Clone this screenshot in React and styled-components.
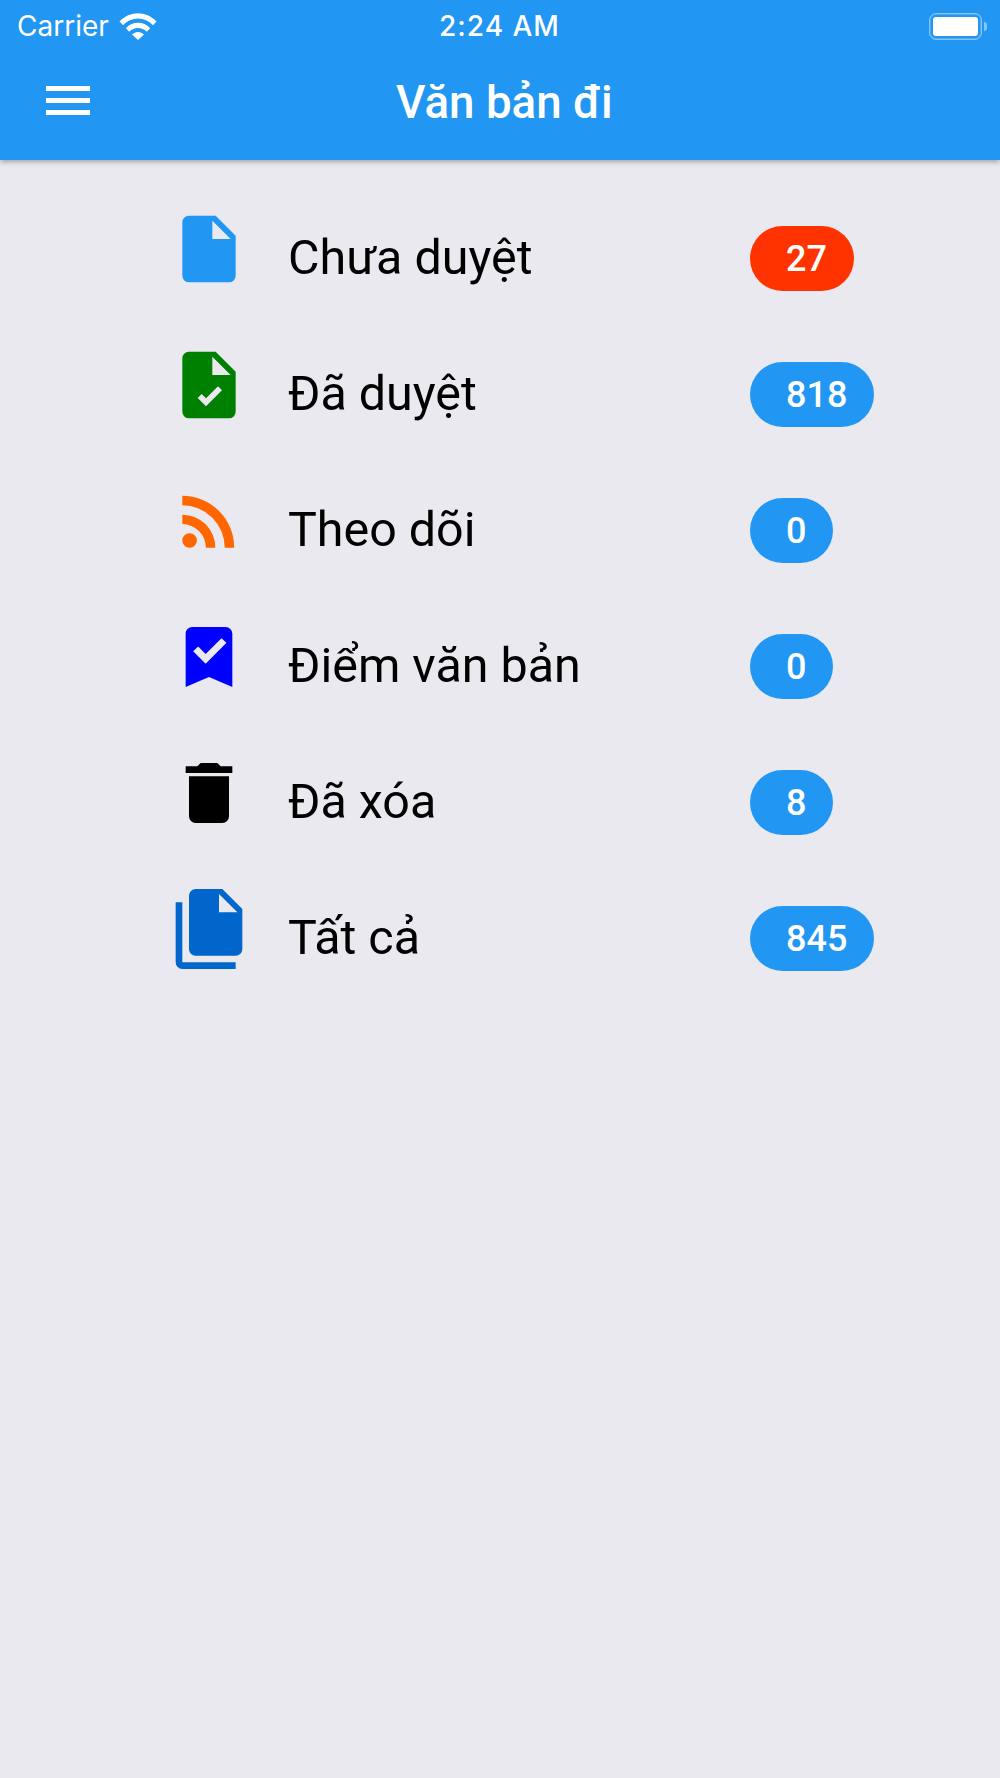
import React from 'react';
import styled, { createGlobalStyle } from 'styled-components';

const MENU_BLUE = '#2196f3';

const GlobalStyle = createGlobalStyle`
  html, body {
    margin: 0;
    padding: 0;
    background: #e9e9ef;
    font-family: Roboto, "Liberation Sans", sans-serif;
  }
`;

const Page = styled.div`
  width: 1000px;
  height: 1778px;
  overflow: hidden;
  background: #e9e9ef;
`;

const Header = styled.header`
  height: 160px;
  background: ${MENU_BLUE};
  color: #fff;
  box-shadow: 0 2px 5px rgba(0, 0, 0, 0.3);
`;

const StatusBar = styled.div`
  height: 48px;
  display: grid;
  grid-template-columns: 1fr auto 1fr;
  align-items: center;
  padding: 2px 13px 0 17px;
  font-family: Inter, "Liberation Sans", sans-serif;
  font-size: 28px;
`;

const Carrier = styled.div`
  display: flex;
  align-items: center;
  gap: 10px;
`;

const Clock = styled.div`
  font-weight: 500;
  letter-spacing: 1px;
  margin-left: -5px;
`;

const Battery = styled.div`
  justify-self: end;
  display: flex;
  align-items: center;
  gap: 2px;
`;

const BatteryShell = styled.div`
  box-sizing: border-box;
  width: 53px;
  height: 27px;
  padding: 3px;
  border: 1px solid rgba(255, 255, 255, 0.45);
  border-radius: 7px;
  box-shadow: inset 0 0 0 1px rgba(255, 255, 255, 0.2);
`;

const BatteryLevel = styled.div`
  height: 100%;
  background: #fff;
  border-radius: 3px;
`;

const BatteryNub = styled.div`
  width: 3px;
  height: 9px;
  background: rgba(255, 255, 255, 0.45);
  border-radius: 0 3px 3px 0;
`;

const NavBar = styled.div`
  height: 112px;
  display: flex;
  align-items: flex-start;
  padding-left: 46px;
`;

const MenuButton = styled.div`
  width: 44px;
  margin-top: 36px;
  display: flex;
  flex-direction: column;
  gap: 7px;
`;

const MenuLine = styled.div`
  height: 5px;
  background: #fff;
`;

const Title = styled.h1`
  margin: 0 0 0 306px;
  font-size: 45.7px;
  font-weight: 470;
  line-height: 56px;
  padding-top: 25px;
  white-space: nowrap;
`;

const List = styled.div`
  padding: 49px 0 0 169px;
`;

const Row = styled.div`
  height: 136px;
  display: flex;
  align-items: flex-start;
`;

const IconBox = styled.svg`
  width: 80px;
  height: 80px;
  flex: none;
  fill: ${(p) => p.$color};
`;

const Label = styled.div`
  width: 462px;
  margin-left: 39px;
  font-size: 48.4px;
  line-height: 97px;
  color: #000;
  white-space: nowrap;
`;

const Badge = styled.div`
  height: 65px;
  margin-top: 17px;
  padding: 0 27px 0 36px;
  border-radius: 33px;
  background: ${(p) => p.$color};
  color: #fff;
  font-size: 36px;
  font-weight: 470;
  line-height: 67px;
`;

const ICONS = {
  file: 'M13,9V3.5L18.5,9M6,2C4.89,2 4,2.89 4,4V20A2,2 0 0,0 6,22H18A2,2 0 0,0 20,20V8L14,2H6Z',
  fileCheck:
    'M13,9V3.5L18.5,9M6,2C4.89,2 4,2.89 4,4V20A2,2 0 0,0 6,22H18A2,2 0 0,0 20,20V8L14,2H6ZM11.1,18.4L8.6,15.9L9.8,14.7L11.1,16L14.7,12.4L15.9,13.6L11.1,18.4Z',
  rss: 'M6.18,15.64A2.18,2.18 0 0,1 8.36,17.82C8.36,19 7.38,20 6.18,20C5,20 4,19 4,17.82A2.18,2.18 0 0,1 6.18,15.64M4,4.44A15.56,15.56 0 0,1 19.56,20H16.73A12.73,12.73 0 0,0 4,7.27V4.44M4,10.1A9.9,9.9 0 0,1 13.9,20H11.07A7.07,7.07 0 0,0 4,12.93V10.1Z',
  bookmark:
    'M17,3A2,2 0 0,1 19,5V21L12,18L5,21V5C5,3.89 5.9,3 7,3H17M11,14L17.25,7.76L15.75,6.34L11,11.08L8.75,8.83L7.25,10.25L11,14Z',
  trash: 'M19,4H15.5L14.5,3H9.5L8.5,4H5V6H19M6,19A2,2 0 0,0 8,21H16A2,2 0 0,0 18,19V7H6V19Z',
  files:
    'M15,7H20.5L15,1.5V7M8,0H16L22,6V18A2,2 0 0,1 20,20H8C6.89,20 6,19.1 6,18V2A2,2 0 0,1 8,0M4,4V22H20V24H4A2,2 0 0,1 2,22V4H4Z',
};

const items = [
  { icon: 'file', color: MENU_BLUE, label: 'Chưa duyệt', count: 27, badge: '#ff3300' },
  { icon: 'fileCheck', color: '#008000', label: 'Đã duyệt', count: 818 },
  { icon: 'rss', color: '#ff6600', label: 'Theo dõi', count: 0 },
  { icon: 'bookmark', color: '#0000ff', label: 'Điểm văn bản', count: 0 },
  { icon: 'trash', color: '#000000', label: 'Đã xóa', count: 8 },
  { icon: 'files', color: '#0066cc', label: 'Tất cả', count: 845 },
];

const WifiIcon = () => (
  <svg width="38" height="28" viewBox="0 0 38 28" fill="#fff">
    <path d="M0.5 9.5C10.8 -1.5 27.2 -1.5 37.5 9.5L34 13.2C25.7 4.4 12.3 4.4 4 13.2Z" />
    <path d="M6.8 16.2C13.6 9 24.4 9 31.2 16.2L27.7 19.8C22.8 14.8 15.2 14.8 10.3 19.8Z" />
    <path d="M13 22.5C16.4 19 21.6 19 25 22.5L19 28Z" />
  </svg>
);

const App = () => {
  return (
    <Page>
      <GlobalStyle />
      <Header>
        <StatusBar>
          <Carrier>
            Carrier
            <WifiIcon />
          </Carrier>
          <Clock>2:24 AM</Clock>
          <Battery>
            <BatteryShell>
              <BatteryLevel />
            </BatteryShell>
            <BatteryNub />
          </Battery>
        </StatusBar>
        <NavBar>
          <MenuButton>
            <MenuLine />
            <MenuLine />
            <MenuLine />
          </MenuButton>
          <Title>Văn bản đi</Title>
        </NavBar>
      </Header>
      <List>
        {items.map((item) => (
          <Row key={item.label}>
            <IconBox viewBox="0 0 24 24" $color={item.color}>
              <path d={ICONS[item.icon]} />
            </IconBox>
            <Label>{item.label}</Label>
            <Badge $color={item.badge || MENU_BLUE}>{item.count}</Badge>
          </Row>
        ))}
      </List>
    </Page>
  );
};

export default App;
